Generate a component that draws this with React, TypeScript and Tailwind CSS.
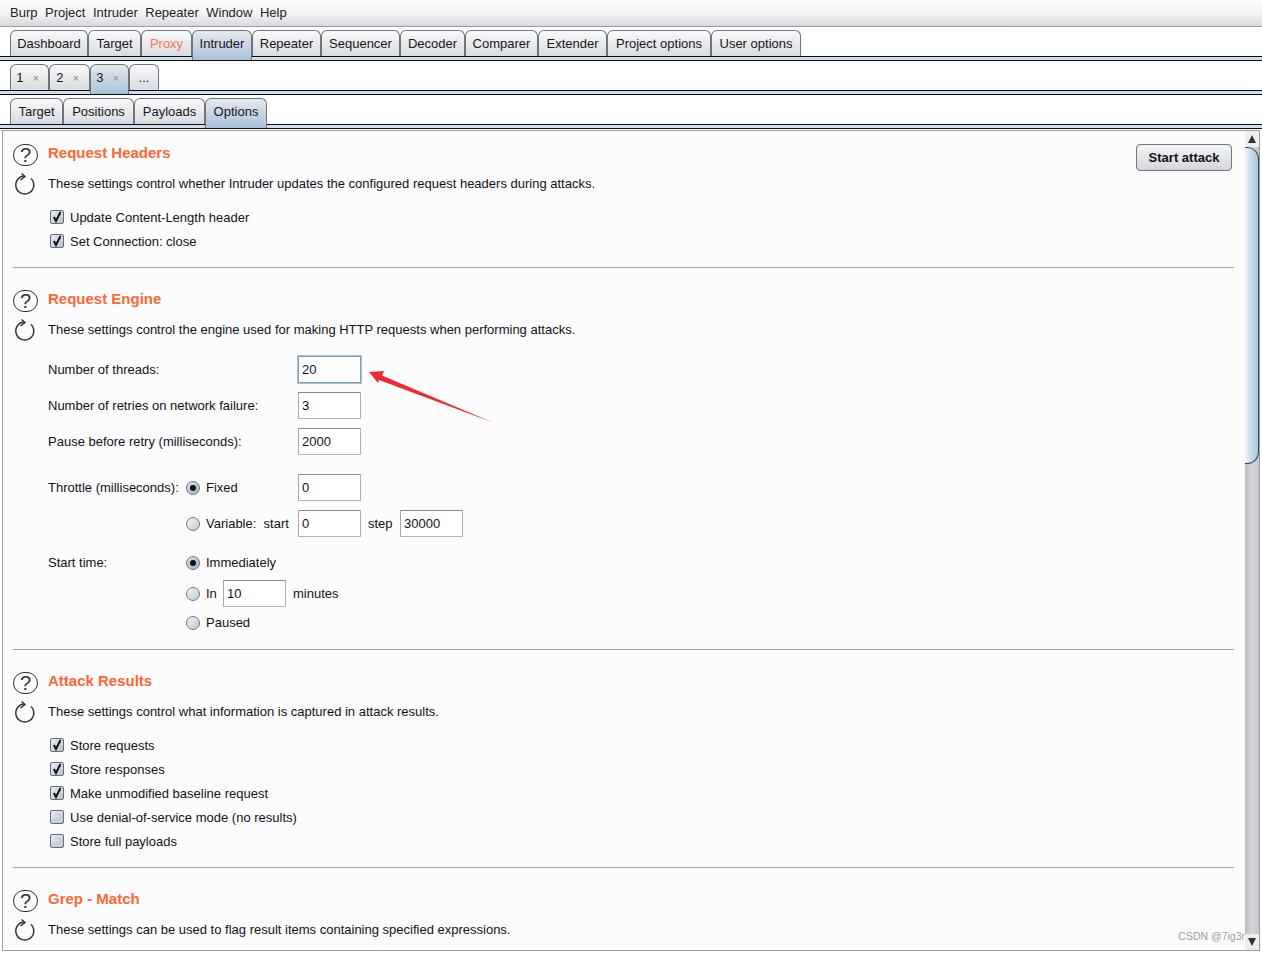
import React from "react";

const mainTabs: [string, string, boolean?, boolean?][] = [
  ["Dashboard", "w-[78px]"],
  ["Target", "w-[53px]"],
  ["Proxy", "w-[51px]", false, true],
  ["Intruder", "w-[60px]", true],
  ["Repeater", "w-[69px]"],
  ["Sequencer", "w-[79px]"],
  ["Decoder", "w-[65px]"],
  ["Comparer", "w-[73px]"],
  ["Extender", "w-[69px]"],
  ["Project options", "w-[104px]"],
  ["User options", "w-[90px]"],
];

const subTabs: [string, string, boolean?][] = [
  ["Target", "w-[53px]"],
  ["Positions", "w-[71px]"],
  ["Payloads", "w-[71px]"],
  ["Options", "w-[62px]", true],
];

function Tab({ label, width, selected, orange, close }: { label: string; width: string; selected?: boolean; orange?: boolean; close?: boolean }) {
  return (
    <div
      className={`relative flex h-[26px] items-center justify-center rounded-t-[6px] border border-b-0 border-[#6f737c] ${width} ${
        selected ? "z-10 -mb-[4px] h-[30px] bg-gradient-to-b from-[#e6eaef] to-[#a9c2d8] pb-[4px] border-[#3d5068]" : "bg-gradient-to-b from-[#fafafb] to-[#d9dbe0]"
      } ${orange ? "text-[#ff7350]" : "text-[#16161c]"}`}
    >
      <span>{label}</span>
      {close && <span className="ml-[9px] mr-[4px] mt-[2px] text-[11px] text-[#8b8d92]">×</span>}
    </div>
  );
}

function Stripe() {
  return <div className="h-[5px] border-y border-[#0a0a14] bg-[#cfdded]" />;
}

function QuestionIcon() {
  return (
    <div className="flex h-[25px] w-[25px] items-center justify-center rounded-full border-[1.5px] border-[#333] text-[20px] leading-none text-[#333]">
      ?
    </div>
  );
}

function ReloadIcon() {
  return (
    <svg width="25" height="25" viewBox="0 0 25 25" fill="none">
      <path d="M18 6.5 A9 9 0 1 1 11.5 4" stroke="#333" strokeWidth="1.5" />
      <path d="M8.5 1.5 L12 4.5 L7.5 8" stroke="#333" strokeWidth="1.4" fill="none" />
    </svg>
  );
}

function SectionHeader({ title, desc, action }: { title: string; desc: string; action?: React.ReactNode }) {
  return (
    <div className="flex h-[51px]">
      <div className="flex w-[35px] shrink-0 flex-col pt-[2px]">
        <QuestionIcon />
        <div className="mt-[6px]">
          <ReloadIcon />
        </div>
      </div>
      <div className="min-w-0 flex-1 pt-px">
        <div className="flex h-[20px] items-start justify-between">
          <h2 className="text-[15px] font-bold leading-[20px] text-[#ff6633]">{title}</h2>
          {action}
        </div>
        <p className="mt-[11px] h-[20px] leading-[20px]">{desc}</p>
      </div>
    </div>
  );
}

function Check({ label, checked }: { label: string; checked?: boolean }) {
  return (
    <div className="flex h-[24px] items-center pl-[37px]">
      <div className="flex h-[14px] w-[14px] items-center justify-center rounded-[2px] border border-[#666c78] bg-gradient-to-br from-[#e6eaf0] to-[#b7c4d4]">
        {checked && (
          <svg width="12" height="12" viewBox="0 0 12 12">
            <path d="M2.8 6 L5 10 L9.5 1" stroke="#111" strokeWidth="2" fill="none" />
          </svg>
        )}
      </div>
      <span className="ml-[6px] pt-px">{label}</span>
    </div>
  );
}

function Radio({ checked }: { checked?: boolean }) {
  return (
    <div className={`flex h-[14px] w-[14px] shrink-0 items-center justify-center rounded-full border border-[#70757e] bg-gradient-to-br ${checked ? "from-[#d9e2ec] to-[#9fb3c8]" : "from-[#f4f4f6] to-[#c6c8ce]"}`}>
      {checked && <div className="h-[6px] w-[6px] rounded-full bg-[#111]" />}
    </div>
  );
}

function Field({ value, width = "w-[63px]", focused }: { value: string; width?: string; focused?: boolean }) {
  return (
    <div className={`flex h-[27px] shrink-0 items-center border pl-[3px] ${width} ${focused ? "border-[#7f9db9] bg-white shadow-[0_0_0_1px_#a9c2d8]" : "border-t-[#8a8a8a] border-l-[#a8a8a8] border-r-[#b4b4b4] border-b-[#b4b4b4] bg-white"}`}>
      {value}
    </div>
  );
}

function FieldRow({ label, value, focused, className = "" }: { label: string; value: string; focused?: boolean; className?: string }) {
  return (
    <div className={`flex h-[27px] items-center ${className}`}>
      <span className="w-[250px] shrink-0">{label}</span>
      <Field value={value} focused={focused} />
    </div>
  );
}

export default function App() {
  return (
    <div
      className="flex h-[953px] w-[1262px] flex-col overflow-hidden bg-white text-[13px] text-[#111118]"
      style={{ fontFamily: '"Liberation Sans", Arial, sans-serif' }}
    >
      <div className="flex h-[27px] shrink-0 items-center gap-[7.5px] border-b border-[#9a9ca4] bg-gradient-to-b from-[#fbfbfb] via-[#f4f4f5] to-[#d8d9de] pl-[10px] text-[#222]">
        {["Burp", "Project", "Intruder", "Repeater", "Window", "Help"].map((m) => (
          <span key={m}>{m}</span>
        ))}
      </div>

      <div className="flex pl-[10px] pt-[3px]">
        {mainTabs.map(([l, w, s, o]) => (
          <Tab key={l} label={l} width={w} selected={s} orange={o} />
        ))}
      </div>
      <Stripe />

      <div className="flex pl-[10px] pt-[3px]">
        <Tab label="1" width="w-[39px]" close />
        <Tab label="2" width="w-[41px]" close />
        <Tab label="3" width="w-[39px]" selected close />
        <Tab label="..." width="w-[30px]" />
      </div>
      <Stripe />

      <div className="flex pl-[10px] pt-[3px]">
        {subTabs.map(([l, w, s]) => (
          <Tab key={l} label={l} width={w} selected={s} />
        ))}
      </div>
      <Stripe />

      <div className="ml-[2px] mr-[2px] mt-px flex h-[821px] shrink-0 border border-[#9a9ca8] bg-[#fcfcfd]">
        <div className="relative min-w-0 flex-1 overflow-hidden pl-[10px] pr-[11px]">
          <section className="pt-[11px]">
            <SectionHeader
              title="Request Headers"
              desc="These settings control whether Intruder updates the configured request headers during attacks."
              action={
                <button className="mr-[2px] mt-px flex h-[27px] w-[96px] items-center justify-center rounded-[4px] border border-[#70747c] bg-gradient-to-b from-[#f4f5f7] to-[#d3d6dc] text-[13px] font-bold text-[#111]">
                  Start attack
                </button>
              }
            />
            <div className="mt-[12px]">
              <Check label="Update Content-Length header" checked />
              <Check label="Set Connection: close" checked />
            </div>
          </section>
          <div className="mt-[14px] h-px bg-[#a5a7b0]" />

          <section className="pt-[20px]">
            <SectionHeader title="Request Engine" desc="These settings control the engine used for making HTTP requests when performing attacks." />
            <div className="pl-[35px]">
              <FieldRow className="mt-[17px]" label="Number of threads:" value="20" focused />
              <FieldRow className="mt-[9px]" label="Number of retries on network failure:" value="3" />
              <FieldRow className="mt-[9px]" label="Pause before retry (milliseconds):" value="2000" />
              <div className="mt-[19px] flex h-[27px] items-center">
                <span className="w-[138px] shrink-0 whitespace-nowrap">Throttle (milliseconds):</span>
                <div className="flex w-[112px] shrink-0 items-center gap-[6px]">
                  <Radio checked />
                  <span>Fixed</span>
                </div>
                <Field value="0" />
              </div>
              <div className="mt-[9px] flex h-[27px] items-center pl-[138px]">
                <div className="flex w-[112px] shrink-0 items-center gap-[6px]">
                  <Radio />
                  <span>Variable:&nbsp; start</span>
                </div>
                <Field value="0" />
                <span className="ml-[7px] w-[32px]">step</span>
                <Field value="30000" />
              </div>
              <div className="mt-[14px] flex h-[24px] items-center">
                <span className="w-[138px] shrink-0">Start time:</span>
                <Radio checked />
                <span className="ml-[6px]">Immediately</span>
              </div>
              <div className="mt-[5px] flex h-[27px] items-center pl-[138px]">
                <Radio />
                <span className="ml-[6px] w-[17px]">In</span>
                <Field value="10" />
                <span className="ml-[7px]">minutes</span>
              </div>
              <div className="mt-[4px] flex h-[24px] items-center pl-[138px]">
                <Radio />
                <span className="ml-[6px]">Paused</span>
              </div>
            </div>
          </section>
          <div className="mt-[14px] h-px bg-[#a5a7b0]" />

          <section className="pt-[20px]">
            <SectionHeader title="Attack Results" desc="These settings control what information is captured in attack results." />
            <div className="mt-[12px]">
              <Check label="Store requests" checked />
              <Check label="Store responses" checked />
              <Check label="Make unmodified baseline request" checked />
              <Check label="Use denial-of-service mode (no results)" />
              <Check label="Store full payloads" />
            </div>
          </section>
          <div className="mt-[14px] h-px bg-[#a5a7b0]" />

          <section className="pt-[20px]">
            <SectionHeader title="Grep - Match" desc="These settings can be used to flag result items containing specified expressions." />
          </section>

          <svg className="absolute left-[362px] top-[236px]" width="132" height="58" viewBox="0 0 132 58">
            <polygon points="4,5 19,4 17,8.5 128,55.5 14,13 13,16" fill="#ee2a33" />
          </svg>
          <span className="absolute bottom-[5px] right-0 text-[10.5px] text-[#9d9fa3]">CSDN @7ig3r</span>
        </div>

        <div className="flex w-[14px] shrink-0 flex-col bg-gradient-to-r from-[#b9bac0] via-[#d6d7db] to-[#c4c5cb]">
          <div className="flex h-[16px] items-center justify-center bg-[#eceded]">
            <div className="h-0 w-0 border-x-[4px] border-b-[8px] border-x-transparent border-b-[#333]" />
          </div>
          <div className="h-[317px] rounded-r-[12px] border-y border-r border-[#33445c] bg-gradient-to-r from-[#f2f6fa] via-[#c6dcee] to-[#a9c6de]" />
          <div className="flex-1" />
          <div className="flex h-[16px] items-center justify-center bg-[#eceded]">
            <div className="h-0 w-0 border-x-[4px] border-t-[8px] border-x-transparent border-t-[#333]" />
          </div>
        </div>
      </div>
    </div>
  );
}
